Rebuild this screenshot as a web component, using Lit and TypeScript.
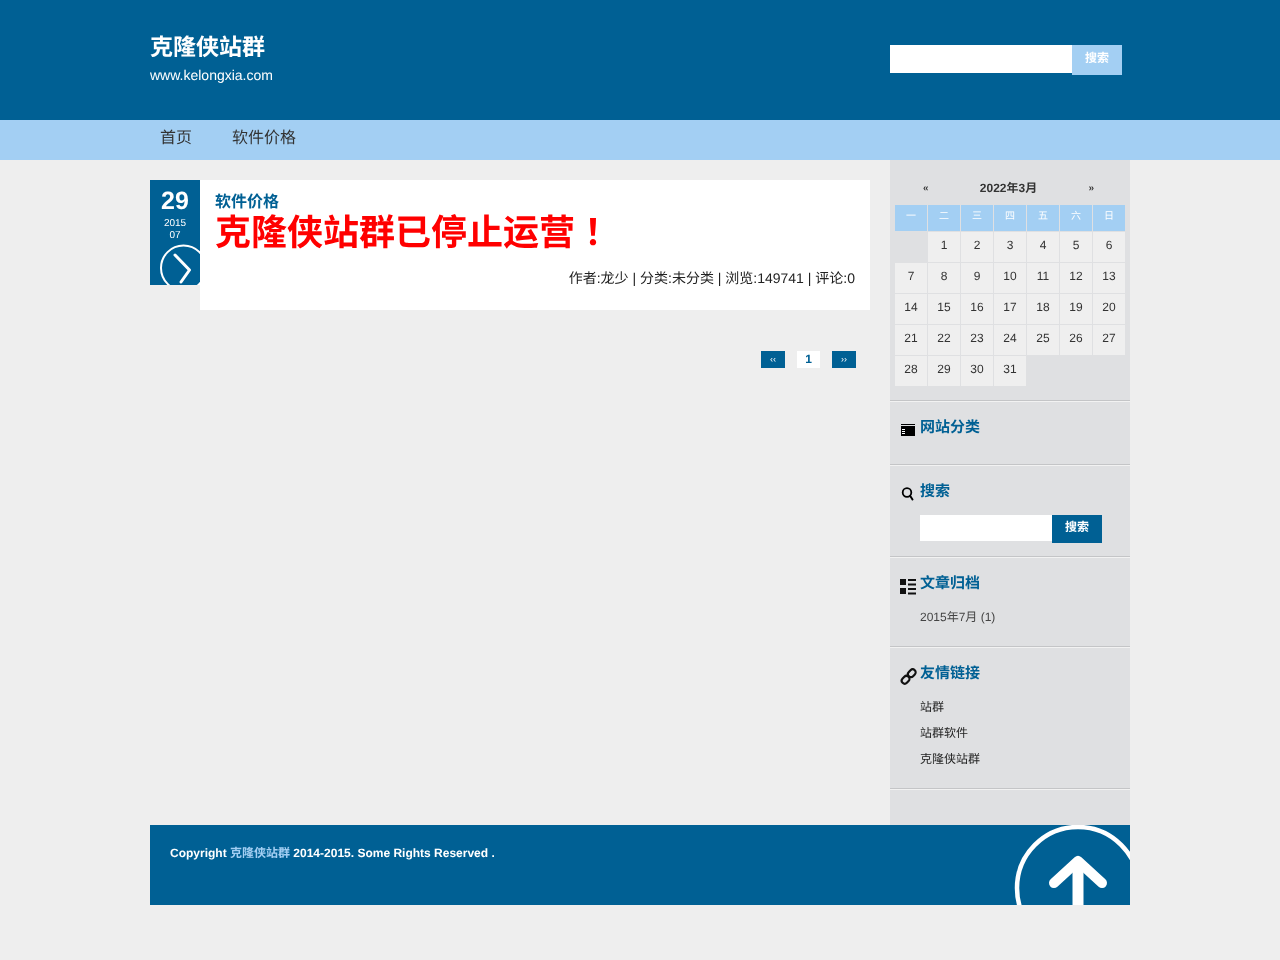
import { LitElement, html, css } from "lit";
import { customElement } from "lit/decorators.js";

const WEEK = ["一", "二", "三", "四", "五", "六", "日"];
const DAYS: (number | null)[] = [null, ...Array.from({ length: 31 }, (_, i) => i + 1)];

@customElement("app-root")
export class AppRoot extends LitElement {
  static styles = css`
    :host {
      display: block;
      min-height: 960px;
      background: #eeeeee;
      font-family: "Liberation Sans", "Noto Sans CJK SC", sans-serif;
      text-rendering: geometricPrecision;
      color: #222;
    }
    .page { will-change: transform; }
    a { color: inherit; text-decoration: none; }
    .header { background: #006094; height: 120px; }
    .wrap { width: 980px; margin: 0 auto; box-sizing: border-box; }
    .header .wrap { display: flex; justify-content: space-between; height: 120px; }
    .brand { padding-top: 32px; color: #fff; }
    .brand h1 { margin: 0; font-size: 23px; line-height: 30px; font-weight: bold; }
    .brand p { margin: 3px 0 0; font-size: 14px; line-height: 20px; }
    .hsearch { display: flex; align-items: flex-start; padding-top: 45px; width: 240px; }
    .hsearch .field { width: 182px; height: 28px; background: #fff; }
    .hsearch .btn { width: 50px; height: 30px; background: #a3cff3; color: #fff; font-size: 12px; font-weight: bold; text-align: center; line-height: 26px; }
    .nav { background: #a3cff3; height: 40px; }
    .nav .wrap { display: flex; gap: 40px; padding-left: 10px; font-size: 16px; line-height: 38px; color: #333; }
    .body { display: flex; align-items: stretch; }
    .main { width: 720px; margin-right: 20px; padding-top: 20px; box-sizing: border-box; }
    .post { display: flex; align-items: flex-start; }
    .date { width: 50px; height: 105px; background: #006094; color: #fff; text-align: center; position: relative; overflow: hidden; box-sizing: border-box; padding-top: 6px; }
    .date b { display: block; font-size: 25px; line-height: 30px; }
    .date span { display: block; font-size: 10px; line-height: 12px; }
    .date span.y { margin-top: 2px; }
    .date svg { position: absolute; left: 0; top: 60px; }
    .card { flex: 1; height: 130px; background: #fff; padding: 13px 15px 0; box-sizing: border-box; }
    .cat { font-size: 16px; line-height: 20px; font-weight: bold; color: #006094; }
    .title { font-size: 36px; line-height: 40px; font-weight: bold; color: #ff0000; margin-top: -3px; }
    .title span { font-family: "Noto Sans CJK JP", sans-serif; }
    .meta { text-align: right; font-size: 14px; line-height: 20px; margin-top: 15px; color: #222; }
    .pager { display: flex; justify-content: flex-end; gap: 12px; padding: 41px 14px 0 0; }
    .pager span { height: 17px; line-height: 17px; text-align: center; font-size: 9px; background: #006094; color: #fff; width: 24px; }
    .pager span.cur { background: #fff; color: #006094; font-size: 12px; line-height: 16px; font-weight: bold; width: 23px; }
    .side { width: 240px; background: #dfe0e2; height: 665px; }
    .sec { border-bottom: 1px solid #c4c5c7; box-shadow: 0 1px 0 #f2f2f2; margin-bottom: 1px; box-sizing: border-box; }
    .s0 { height: 241px; padding: 20px 5px 0; }
    .s1 { height: 63px; }
    .s2 { height: 91px; }
    .s3 { height: 89px; }
    .s4 { height: 141px; }
    .calhead { display: flex; justify-content: space-between; padding: 0 31px 0 28px; font-size: 12px; line-height: 16px; height: 25px; color: #333; font-weight: bold; }
    .calhead i { font-style: normal; font-size: 10px; line-height: 17px; }
    .cal { display: grid; grid-template-columns: repeat(7, 32px); gap: 1px; }
    .cal .h { height: 26px; background: #a3cff3; color: #fff; font-size: 10px; line-height: 23px; text-align: center; }
    .cal .d { height: 30px; background: #efefef; color: #333; font-size: 12px; line-height: 26px; text-align: center; }
    .cal .e { height: 30px; background: transparent; }
    .ttl { position: relative; padding: 16px 0 0 30px; font-size: 15px; line-height: 20px; font-weight: bold; color: #006094; }
    .ttl svg { position: absolute; left: 10px; top: 20px; }
    .ssearch { display: flex; align-items: flex-start; padding: 13px 0 0 30px; }
    .ssearch .field { width: 132px; height: 26px; background: #fff; }
    .ssearch .btn { width: 50px; height: 28px; background: #006094; color: #fff; font-size: 12px; font-weight: bold; text-align: center; line-height: 24px; }
    .list { padding: 10px 0 0 30px; font-size: 12px; line-height: 26px; color: #444; }
    .list a { display: block; color: #222; }
    .footer { height: 80px; background: #006094; color: #fff; font-size: 12px; font-weight: bold; line-height: 16px; position: relative; overflow: hidden; padding: 20px; box-sizing: border-box; }
    .footer a { color: #a3cff3; }
    .footer svg { position: absolute; right: 0; top: 0; }
  `;

  render() {
    return html`
      <div class="page">
      <div class="header"><div class="wrap">
        <div class="brand"><h1>克隆侠站群</h1><p>www.kelongxia.com</p></div>
        <div class="hsearch"><div class="field"></div><div class="btn">搜索</div></div>
      </div></div>
      <div class="nav"><div class="wrap"><a>首页</a><a>软件价格</a></div></div>
      <div class="wrap">
        <div class="body">
          <div class="main">
            <div class="post">
              <div class="date">
                <b>29</b><span class="y">2015</span><span>07</span>
                <svg width="50" height="45" viewBox="0 60 50 45" fill="none" stroke="#fff" stroke-linecap="round" stroke-linejoin="round">
                  <circle cx="33.5" cy="88" r="22.5" stroke-width="2"></circle>
                  <path d="M25 75 L39.5 90 L31 102" stroke-width="3"></path>
                </svg>
              </div>
              <div class="card">
                <div class="cat">软件价格</div>
                <div class="title">克隆侠站群已停止运营<span>！</span></div>
                <div class="meta">作者:龙少 | 分类:未分类 | 浏览:149741 | 评论:0</div>
              </div>
            </div>
            <div class="pager"><span>‹‹</span><span class="cur">1</span><span>››</span></div>
          </div>
          <div class="side">
            <div class="sec s0">
              <div class="calhead"><i>«</i><span>2022年3月</span><i>»</i></div>
              <div class="cal">
                ${WEEK.map((w) => html`<div class="h">${w}</div>`)}
                ${DAYS.map((d) => d === null ? html`<div class="e"></div>` : html`<div class="d">${d}</div>`)}
              </div>
            </div>
            <div class="sec s1"><div class="ttl">
              <svg width="16" height="16" viewBox="0 0 16 16"><path fill="#000" d="M1 2h14v1H1zM1 4h14v10H1z"></path><path fill="#fff" d="M2 7h3v1H2zM2 9h3v1H2zM2 11h3v1H2z"></path></svg>网站分类</div></div>
            <div class="sec s2"><div class="ttl">
              <svg width="16" height="16" viewBox="0 0 16 16" fill="none" stroke="#000"><circle cx="7" cy="6.5" r="4.3" stroke-width="1.8"></circle><path d="M10.2 10L12.5 13.5" stroke-width="2" stroke-linecap="round"></path></svg>搜索</div>
              <div class="ssearch"><div class="field"></div><div class="btn">搜索</div></div>
            </div>
            <div class="sec s3"><div class="ttl">
              <svg width="18" height="18" viewBox="0 0 18 18"><path fill="#111" d="M0 1h6v6H0zM0 10h6v6H0zM8 1h8v2H8zM8 5.5h8v2H8zM8 10h8v2H8zM8 14.5h8v2H8z"></path></svg>文章归档</div>
              <div class="list">2015年7月 (1)</div>
            </div>
            <div class="sec s4"><div class="ttl">
              <svg width="18" height="18" viewBox="0 0 18 18" fill="none" stroke="#111" stroke-width="2.2"><rect x="7.6" y="2.2" width="8.4" height="6" rx="3" transform="rotate(-45 11.8 5.2)"></rect><rect x="1.4" y="8.8" width="8.4" height="6" rx="3" transform="rotate(-45 5.6 11.8)"></rect></svg>友情链接</div>
              <div class="list"><a>站群</a><a>站群软件</a><a>克隆侠站群</a></div>
            </div>
          </div>
        </div>
        <div class="footer">
          Copyright <a>克隆侠站群</a> 2014-2015. Some Rights Reserved .
          <svg width="130" height="80" viewBox="0 0 130 80" fill="none" stroke="#fff" stroke-linecap="round" stroke-linejoin="round">
            <circle cx="78" cy="63" r="61" stroke-width="4.5"></circle>
            <path d="M78 36 L78 90" stroke-width="11" stroke-linecap="butt"></path>
            <path d="M54 58 L78 36 L102 58" stroke-width="10"></path>
          </svg>
        </div>
      </div>
      </div>
    `;
  }
}
